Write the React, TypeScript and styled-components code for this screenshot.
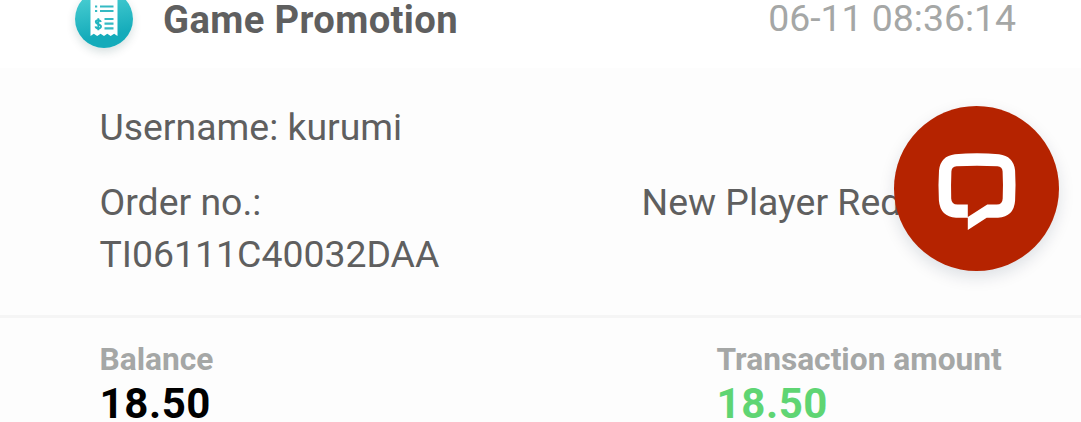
import { createGlobalStyle, styled } from "styled-components";

const GlobalStyle = createGlobalStyle`
  * {
    box-sizing: border-box;
  }
  body {
    margin: 0;
    background-color: #fdfdfd;
    font-family: Roboto, sans-serif;
    overflow: hidden;
  }
`;

const Wrapper = styled.div`
  width: 100%;
  height: 422px;
  overflow: hidden;
`;

const Header = styled.header`
  display: flex;
  align-items: flex-start;
  height: 68px;
  padding: 0 65px 0 75px;
  background-color: white;
`;

const IconCircle = styled.div`
  display: flex;
  width: 58px;
  height: 58px;
  margin-top: -10px;
  border-radius: 50%;
  background: linear-gradient(170deg, #45cbd0 15%, #14abba 75%);
  box-shadow: 0 4px 10px rgba(0, 60, 60, 0.16);
`;

const Title = styled.h1`
  margin: -6px auto 0 30px;
  color: #5f5f5f;
  font-size: 38.2px;
  font-weight: 700;
  line-height: 52px;
  letter-spacing: 0.37px;
`;

const Time = styled.time`
  margin-top: -8px;
  color: #a5a7a6;
  font-size: 37.4px;
  line-height: 52px;
`;

const Details = styled.section`
  display: flex;
  flex-direction: column;
  gap: 23px;
  height: 247px;
  padding: 33px 65px 0 99.5px;
`;

const Row = styled.div`
  display: flex;
`;

const Text = styled.p<{ $width?: number }>`
  width: ${({ $width }) => ($width ? `${$width}px` : "auto")};
  margin: 0;
  color: #5f5f5f;
  font-size: 37.4px;
  line-height: 52px;
  white-space: nowrap;
`;

const Summary = styled.section`
  display: flex;
  height: 107px;
  padding: 22px 0 0 99.5px;
  border-top: 3px solid #f5f5f5;
`;

const Stat = styled.div<{ $width?: number }>`
  width: ${({ $width }) => ($width ? `${$width}px` : "auto")};
`;

const Label = styled.div`
  color: #a5a7a6;
  font-size: 31.7px;
  font-weight: 700;
  line-height: 40px;
  white-space: nowrap;
`;

const Amount = styled.div<{ $color: string }>`
  color: ${({ $color }) => $color};
  font-size: 42px;
  font-weight: 700;
  line-height: 48px;
  letter-spacing: 0.6px;
`;

const ChatButton = styled.button`
  position: fixed;
  top: 106px;
  right: 22px;
  width: 165px;
  height: 165px;
  padding: 0;
  border: 0;
  border-radius: 50%;
  background-color: #b52300;
  box-shadow: 0 6px 16px rgba(0, 30, 60, 0.13);
  cursor: pointer;

  svg {
    display: block;
  }
`;

function ReceiptIcon() {
  return (
    <svg width="58" height="58" viewBox="0 0 58 58" fill="none">
      <path
        d="M15.500 9h27v37l-3.400-2.200-3.400 2.200-3.400-2.200-3.300 2.200-3.400-2.200-3.400 2.200-3.400-2.200-3.300 2.200z"
        fill="white"
      />
      <path
        d="M20 16.500h2.200M25 16.500h13.500M20 21h2.200M25 21h13.500M29.500 29h9M29.500 33.700h9M29.500 38.400h9"
        stroke="#35bac3"
        strokeWidth="2.2"
      />
      <path
        d="M25.800 32c-.4-2.400-5-2.500-5 .1 0 2.600 5.200 1.700 5.200 4.500 0 2.500-5.200 2.400-5.400-.2M23.300 28.300v12"
        stroke="#22b5bf"
        strokeWidth="1.900"
      />
    </svg>
  );
}

function ChatIcon() {
  return (
    <svg width="165" height="165" viewBox="0 0 165 165">
      <path
        d="M92.700 111.700L73.800 124V110.900L93.300 98.500H102.800Q108.500 98.500 108.700 92.500Q109.300 79 108.600 65.500Q108.300 60.600 103.500 60.300Q83 59.200 62.500 60.300Q57.700 60.600 57.400 65.500Q56.800 79 57.200 92.500Q57.500 98.500 63.500 98.500H73.800V111.700H62Q46.300 110.800 44.900 94.500Q44 79 45 64.500Q46.500 50 61 48.300Q83 46.200 105 48.300Q119.500 50 121.100 64.500Q122 79 121.100 94.500Q120 110.800 104 111.700Z"
        fill="white"
      />
    </svg>
  );
}

export default function App() {
  return (
    <Wrapper>
      <GlobalStyle />
      <Header>
        <IconCircle>
          <ReceiptIcon />
        </IconCircle>
        <Title>Game Promotion</Title>
        <Time>06-11 08:36:14</Time>
      </Header>
      <Details>
        <Text>Username: kurumi</Text>
        <Row>
          <Text $width={542}>
            Order no.:
            <br />
            TI06111C40032DAA
          </Text>
          <Text>New Player Red</Text>
        </Row>
      </Details>
      <Summary>
        <Stat $width={617}>
          <Label>Balance</Label>
          <Amount $color="#000000">18.50</Amount>
        </Stat>
        <Stat>
          <Label>Transaction amount</Label>
          <Amount $color="#5fd573">18.50</Amount>
        </Stat>
      </Summary>
      <ChatButton aria-label="Chat">
        <ChatIcon />
      </ChatButton>
    </Wrapper>
  );
}
